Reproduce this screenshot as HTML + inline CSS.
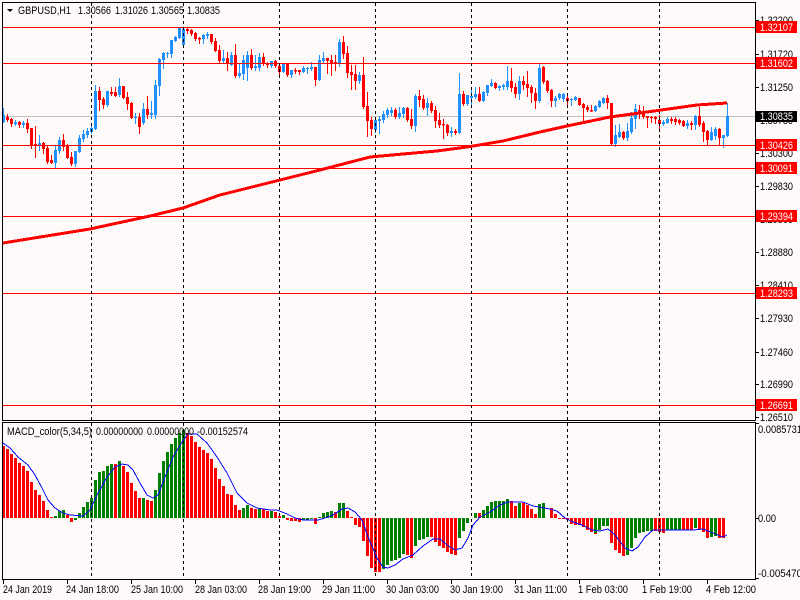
<!DOCTYPE html>
<html><head><meta charset="utf-8"><style>
html,body{margin:0;padding:0;background:#fffafa;width:800px;height:600px;overflow:hidden}
svg{display:block;position:absolute;left:0;top:0}
text{font-family:"Liberation Sans",sans-serif;font-size:11px;fill:#000}
text.w{fill:#fff}
</style></head><body>
<svg width="800" height="600" viewBox="0 0 800 600">
<rect width="800" height="600" fill="#fffafa"/>
<g shape-rendering="crispEdges" fill="none">
<!-- gray bid line -->
<path d="M3 116.5H755" stroke="#c0c0c0"/>
<!-- candle wicks red -->
<path stroke="#f00" d="M7.5 114V122M11.5 118V127M19.5 121V128M27.5 119V133M31.5 128V149M35.5 126V158M43.5 142V154M47.5 146V164M51.5 155V164M63.5 134V151M67.5 144V159M71.5 152V166M99.5 87V111M103.5 97V109M111.5 87V96M115.5 87V97M123.5 86V99M127.5 92V110M131.5 102V119M139.5 113V134M147.5 96V119M187.5 28V34M191.5 29V36M195.5 32V41M199.5 37V44M211.5 34V44M215.5 38V52M219.5 45V64M227.5 52V71M235.5 44V78M251.5 49V70M263.5 53V66M267.5 62V68M275.5 60V68M279.5 63V77M287.5 63V77M295.5 68V74M299.5 70V75M315.5 67V86M327.5 58V74M331.5 55V76M335.5 55V71M343.5 36V59M347.5 46V78M351.5 65V90M355.5 65V90M363.5 57V109M367.5 92V137M371.5 117V136M395.5 108V119M407.5 107V122M411.5 109V129M419.5 90V107M423.5 95V110M431.5 101V113M435.5 106V128M439.5 113V128M443.5 119V139M447.5 124V136M455.5 129V135M463.5 91V106M479.5 87V102M495.5 82V89M511.5 68V92M515.5 83V98M523.5 76V90M527.5 71V97M531.5 85V103M535.5 88V109M543.5 66V84M547.5 80V93M551.5 89V107M567.5 93V107M579.5 98V106M583.5 103V124M587.5 105V112M591.5 105V112M607.5 95V109M611.5 103V145M623.5 131V140M639.5 105V119M643.5 106V119M647.5 116V128M651.5 116V123M655.5 116V124M659.5 115V132M671.5 117V124M675.5 117V125M679.5 119V125M683.5 120V127M691.5 121V130M699.5 107V127M703.5 121V142M707.5 130V146M719.5 128V145"/>
<!-- candle wicks blue -->
<path stroke="#1e90ff" d="M3.5 108V123M15.5 120V126M23.5 121V128M39.5 135V151M55.5 145V168M59.5 137V154M75.5 151V167M79.5 135V153M83.5 130V142M87.5 128V138M91.5 123V134M95.5 85V130M107.5 91V107M119.5 78V97M135.5 113V124M143.5 103V125M151.5 101V119M155.5 80V119M159.5 58V96M163.5 52V69M167.5 52V58M171.5 40V58M175.5 36V42M179.5 28V39M183.5 28V46M203.5 34V44M207.5 32V39M223.5 50V64M231.5 52V66M239.5 63V78M243.5 55V80M247.5 51V81M255.5 55V71M259.5 53V71M271.5 61V68M283.5 63V73M291.5 70V78M303.5 66V73M307.5 67V74M311.5 62V71M319.5 55V81M323.5 52V64M339.5 39V67M359.5 72V84M375.5 117V133M379.5 116V134M383.5 111V123M387.5 108V118M391.5 107V116M399.5 107V119M403.5 107V118M415.5 94V132M427.5 98V116M451.5 127V137M459.5 73V134M467.5 95V106M471.5 89V106M475.5 87V99M483.5 91V102M487.5 85V96M491.5 79V87M499.5 85V91M503.5 84V90M507.5 66V90M519.5 76V100M539.5 63V103M555.5 96V107M559.5 93V100M563.5 93V102M571.5 98V106M575.5 96V101M595.5 105V112M599.5 100V108M603.5 97V104M615.5 125V147M619.5 124V138M627.5 123V141M631.5 112V134M635.5 104V129M663.5 120V126M667.5 117V124M687.5 120V129M695.5 115V130M711.5 127V141M715.5 127V140M723.5 135V148M727.5 103V137"/>
<!-- candle bodies red -->
<path stroke="#f00" stroke-width="3" d="M7.5 117V120M11.5 119V124M19.5 122V125M27.5 123V129M31.5 128V145M35.5 144V146M43.5 143V149M47.5 148V162M51.5 160V163M63.5 140V147M67.5 145V158M71.5 157V164M99.5 91V100M103.5 99V105M111.5 92V94M115.5 92V96M123.5 86V98M127.5 97V104M131.5 103V118M139.5 117V127M147.5 109V115M187.5 29V31M191.5 30V34M195.5 33V39M199.5 38V39.500M211.5 34V42M215.5 41V51M219.5 50V61M227.5 58V64M235.5 55V76M251.5 55V68M263.5 57V64M267.5 63V65M275.5 61V66M279.5 66V72M287.5 63V75M295.5 70V71.500M299.5 70V72M315.5 67V80M327.5 58V61M331.5 60V63M335.5 62V64M343.5 42V54M347.5 53V73M351.5 72V75M355.5 74V81M363.5 75V107M367.5 106V121M371.5 120V129M395.5 110V117M407.5 108V120M411.5 119V126M419.5 96V100M423.5 99V108M431.5 103V111M435.5 110V121M439.5 120V125M443.5 124V125.500M447.5 125V133M455.5 131V133M463.5 94V104M479.5 94V101M495.5 83V88M511.5 81V88M515.5 87V94M523.5 81V85M527.5 84V88M531.5 87V93M535.5 93V101M543.5 67V82M547.5 81V91M551.5 90V101M567.5 98V101M579.5 98V105M583.5 104V108M587.5 107V110M591.5 110V111.500M607.5 98V103M611.5 103V144M623.5 132V138M639.5 110V111.500M643.5 111V117M647.5 116V118M651.5 117V118M655.5 117V119M659.5 120V124M671.5 119V121M675.5 119V122M679.5 120V123M683.5 121V126M691.5 123V125M699.5 116V125M703.5 123V132M707.5 131V140M719.5 129V138"/>
<!-- candle bodies blue -->
<path stroke="#1e90ff" stroke-width="3" d="M3.500 115V122M15.500 122V124M23.500 123V125M39.500 143V145M55.500 150V163M59.500 140V151M75.500 151V164M79.500 138V152M83.500 134V139M87.500 131V135M91.500 128V132M95.500 91V129M107.500 91V105M119.500 86V95M135.500 117V118M143.500 109V123M151.500 113V115M155.500 85V115M159.500 59V86M163.500 53V60M167.500 53V54M171.500 40V54M175.500 37V41M179.500 28V38M183.500 29V45M203.500 35V39M207.500 34V36M223.500 58V61M231.500 55V65M239.500 73V76M243.500 60V74M247.500 55V68M255.500 66V68M259.500 57V68M271.500 61V66M283.500 63V72M291.500 70V75M303.500 68V72M307.500 68V69M311.500 67V69M319.500 60V80M323.500 58V61M339.500 42V63M359.500 75V81M375.500 120V130M379.500 119V121M383.500 114V120M387.500 110V115M391.500 110V113M399.500 113V117M403.500 108V114M415.500 96V126M427.500 103V108M451.500 131V133M459.500 94V133M467.500 95V104M471.500 96V98M475.500 94V97M483.500 92V101M487.500 85V93M491.500 83V86M499.500 86V88M503.500 85V87M507.500 81V87M519.500 81V94M539.500 68V101M555.500 98V101M559.500 94V98M563.500 94V99M571.500 99V100M575.500 97V100M595.500 106V111M599.500 101V107M603.500 98V103M615.500 135V144M619.500 132V137M627.500 131V138M631.500 118V132M635.500 109V119M663.500 122V124M667.500 119V123M687.500 123V126M695.500 116V125M711.500 132V140M715.500 129V136M723.500 135V138M727.500 116V136"/>
<!-- MACD histogram red -->
<path stroke="#f00" stroke-width="3" d="M3.500 446V518M7.500 449V518M11.500 454V518M15.500 458V518M19.500 463V518M23.500 466V518M27.500 471V518M31.500 482V518M35.500 490V518M39.500 495V518M43.500 501V518M47.500 510V518M51.500 517V518M67.500 515V518M71.500 518V522M115.500 464V518M123.500 466V518M127.500 472V518M131.500 483V518M135.500 491V518M139.500 498V518M147.500 500V518M151.500 501V518M187.500 433V518M191.500 436V518M195.500 442V518M199.500 447V518M203.500 450V518M207.500 453V518M211.500 459V518M215.500 468V518M219.500 479V518M223.500 486V518M227.500 494V518M231.500 495V518M235.500 505V518M239.500 510V518M251.500 508V518M255.500 509V518M263.500 509V518M267.500 511V518M275.500 512V518M279.500 516V518M287.500 518V520M291.500 518V521M295.500 518V521M299.500 518V522M315.500 518V524M335.500 512V518M347.500 511V518M351.500 517V518M355.500 518V525M359.500 518V527M363.500 518V541M367.500 518V556M371.500 518V568M375.500 518V572M379.500 518V572M407.500 518V555M411.500 518V558M431.500 518V537M435.500 518V542M439.500 518V546M443.500 518V548M447.500 518V552M451.500 518V554M455.500 518V555M479.500 513V518M511.500 501V518M515.500 506V518M523.500 503V518M527.500 505V518M531.500 509V518M535.500 514V518M551.500 508V518M555.500 514V518M559.500 518V519M563.500 518V519M567.500 518V520M571.500 518V524M575.500 518V525M579.500 518V525M583.500 518V527M587.500 518V530M591.500 518V532M595.500 518V534M611.500 518V543M615.500 518V550M619.500 518V553M623.500 518V556M655.500 518V531M659.500 518V532M663.500 518V533M683.500 518V530M687.500 518V530M691.500 518V530M699.500 518V529M703.500 518V532M707.500 518V538M719.500 518V538M723.500 518V538"/>
<!-- MACD histogram green -->
<path stroke="#008000" stroke-width="3" d="M55.500 516V518M59.500 511V518M63.500 510V518M75.500 518V520M79.500 513V518M83.500 507V518M87.500 502V518M91.500 498V518M95.500 480V518M99.500 472V518M103.500 471V518M107.500 466V518M111.500 464V518M119.500 461V518M143.500 498V518M155.500 490V518M159.500 473V518M163.500 461V518M167.500 452V518M171.500 444V518M175.500 438V518M179.500 433V518M183.500 430V518M243.500 508V518M247.500 505V518M259.500 508V518M271.500 511V518M283.500 515V518M303.500 518V520M307.500 518V520M311.500 518V519M319.500 517V518M323.500 513V518M327.500 512V518M331.500 511V518M339.500 503V518M343.500 503V518M383.500 518V569M387.500 518V565M391.500 518V561M395.500 518V560M399.500 518V558M403.500 518V554M415.500 518V546M419.500 518V540M423.500 518V539M427.500 518V537M459.500 518V538M463.500 518V531M467.500 518V523M475.500 513V518M483.500 510V518M487.500 506V518M491.500 502V518M495.500 501V518M499.500 501V518M503.500 501V518M507.500 499V518M519.500 503V518M539.500 504V518M543.500 503V518M595.500 518V533M599.500 518V530M603.500 518V526M607.500 518V526M627.500 518V555M631.500 518V548M635.500 518V538M639.500 518V533M643.500 518V532M647.500 518V531M651.500 518V531M667.500 518V530M671.500 518V530M675.500 518V530M679.500 518V530M695.500 518V528M711.500 518V537M715.500 518V536"/>
<!-- horizontal red lines -->
<path stroke="#f00" d="M3 27.500H756M3 63.500H756M3 145.500H756M3 168.500H756M3 216.500H756M3 293.500H756M3 405.500H756"/>
<!-- vertical dashed grid -->
<path stroke="#000" stroke-dasharray="3 3" d="M91.500 3V420M183.500 3V420M279.500 3V420M375.500 3V420M471.500 3V420M567.500 3V420M659.500 3V420M91.500 423V579M183.500 423V579M279.500 423V579M375.500 423V579M471.500 423V579M567.500 423V579M659.500 423V579"/>
</g>
<!-- moving average -->
<polyline fill="none" stroke="#f00" stroke-width="3" shape-rendering="crispEdges" points="3,243 90,229 150,216 183,208 220,195 270,182.500 320,170 370,157 403,154 437,151 467,147 503,141 540,132 567,126 610,117 647,112 697,105 727,103"/>
<!-- MACD signal -->
<polyline fill="none" stroke="#00f" stroke-width="1" shape-rendering="crispEdges" points="3,443 10,448 18,457 28,465 35,475 42,488 48,500 55,508 63,513 70,515 83,516 90,510 97,495 107,477 115,467 122,464 128,465 133,470 140,483 147,495 153,498 158,495 165,477 173,457 182,442 188,434 197,434 207,443 217,457 227,473 237,493 247,503 257,508 270,510 277,510 287,514 295,518 303,520 318,520 325,518 333,515 342,509 348,508 355,512 362,520 368,537 377,558 383,567 388,568 395,565 403,559 413,555 423,546 433,539 440,539 447,545 455,550 462,548 468,538 473,525 480,517 490,512 500,505 508,502 523,502 533,506 539,507 550,509 557,511 565,518 573,522 582,525 592,530 600,531 608,529 615,535 625,548 632,551 638,547 645,537 653,530 693,530 703,529 713,533 723,537 727,535"/>
<g shape-rendering="crispEdges" fill="none" stroke="#000">
<!-- frame -->
<path d="M2.500 2.500H755.500V420.500H2.500ZM2.500 422.500H755.500V579.500H2.500Z"/>
<!-- y ticks -->
<path d="M756 20.500H759M756 54.500H759M756 87.500H759M756 120.500H759M756 153.500H759M756 186.500H759M756 219.500H759M756 252.500H759M756 285.500H759M756 318.500H759M756 352.500H759M756 384.500H759M756 417.500H759M756 423.500H759M756 518.500H759M756 578.500H759"/>
<!-- x ticks -->
<path d="M3.500 580V584M67.500 580V584M131.500 580V584M195.500 580V584M259.500 580V584M323.500 580V584M387.500 580V584M451.500 580V584M515.500 580V584M579.500 580V584M643.500 580V584M707.500 580V584"/>
</g>
<!-- header -->
<polygon points="7,9 13,9 10,12" fill="#000"/>
<text x="18" y="14" textLength="53" lengthAdjust="spacingAndGlyphs">GBPUSD,H1</text>
<text x="78" y="14" textLength="33" lengthAdjust="spacingAndGlyphs">1.30566</text>
<text x="115" y="14" textLength="33" lengthAdjust="spacingAndGlyphs">1.31026</text>
<text x="151" y="14" textLength="33" lengthAdjust="spacingAndGlyphs">1.30565</text>
<text x="187" y="14" textLength="33" lengthAdjust="spacingAndGlyphs">1.30835</text>
<text x="7" y="435" textLength="85" lengthAdjust="spacingAndGlyphs">MACD_color(5,34,5)</text>
<text x="96" y="435" textLength="47" lengthAdjust="spacingAndGlyphs">0.00000000</text>
<text x="147" y="435" textLength="47" lengthAdjust="spacingAndGlyphs">0.00000000</text>
<text x="197" y="435" textLength="51" lengthAdjust="spacingAndGlyphs">-0.00152574</text>
<!-- y axis labels -->
<text x="760" y="24" textLength="33" lengthAdjust="spacingAndGlyphs">1.32200</text>
<text x="760" y="58" textLength="33" lengthAdjust="spacingAndGlyphs">1.31720</text>
<text x="760" y="91" textLength="33" lengthAdjust="spacingAndGlyphs">1.31250</text>
<text x="760" y="124" textLength="33" lengthAdjust="spacingAndGlyphs">1.30780</text>
<text x="760" y="157" textLength="33" lengthAdjust="spacingAndGlyphs">1.30300</text>
<text x="760" y="190" textLength="33" lengthAdjust="spacingAndGlyphs">1.29830</text>
<text x="760" y="223" textLength="33" lengthAdjust="spacingAndGlyphs">1.29360</text>
<text x="760" y="256" textLength="33" lengthAdjust="spacingAndGlyphs">1.28880</text>
<text x="760" y="289" textLength="33" lengthAdjust="spacingAndGlyphs">1.28410</text>
<text x="760" y="322" textLength="33" lengthAdjust="spacingAndGlyphs">1.27930</text>
<text x="760" y="356" textLength="33" lengthAdjust="spacingAndGlyphs">1.27460</text>
<text x="760" y="388" textLength="33" lengthAdjust="spacingAndGlyphs">1.26990</text>
<text x="760" y="421" textLength="33" lengthAdjust="spacingAndGlyphs">1.26510</text>
<text x="758" y="433" textLength="44" lengthAdjust="spacingAndGlyphs">0.0085731</text>
<text x="758" y="522" textLength="18" lengthAdjust="spacingAndGlyphs">0.00</text>
<text x="758" y="577" textLength="44" lengthAdjust="spacingAndGlyphs">-0.005470</text>
<!-- price tags -->
<g shape-rendering="crispEdges">
<rect x="756" y="21" width="41" height="12" fill="#f00"/>
<rect x="756" y="57" width="41" height="12" fill="#f00"/>
<rect x="756" y="111" width="41" height="11" fill="#000"/>
<rect x="756" y="139" width="41" height="12" fill="#f00"/>
<rect x="756" y="162" width="41" height="12" fill="#f00"/>
<rect x="756" y="210" width="41" height="12" fill="#f00"/>
<rect x="756" y="287" width="41" height="12" fill="#f00"/>
<rect x="756" y="399" width="41" height="12" fill="#f00"/>
</g>
<text class="w" x="760" y="31" textLength="33" lengthAdjust="spacingAndGlyphs">1.32107</text>
<text class="w" x="760" y="67" textLength="33" lengthAdjust="spacingAndGlyphs">1.31602</text>
<text class="w" x="760" y="120" textLength="33" lengthAdjust="spacingAndGlyphs">1.30835</text>
<text class="w" x="760" y="149" textLength="33" lengthAdjust="spacingAndGlyphs">1.30426</text>
<text class="w" x="760" y="172" textLength="33" lengthAdjust="spacingAndGlyphs">1.30091</text>
<text class="w" x="760" y="220" textLength="33" lengthAdjust="spacingAndGlyphs">1.29394</text>
<text class="w" x="760" y="297" textLength="33" lengthAdjust="spacingAndGlyphs">1.28293</text>
<text class="w" x="760" y="409" textLength="33" lengthAdjust="spacingAndGlyphs">1.26691</text>
<!-- time axis -->
<text x="3" y="593" textLength="49" lengthAdjust="spacingAndGlyphs">24 Jan 2019</text>
<text x="66" y="593" textLength="53" lengthAdjust="spacingAndGlyphs">24 Jan 18:00</text>
<text x="131" y="593" textLength="52" lengthAdjust="spacingAndGlyphs">25 Jan 10:00</text>
<text x="195" y="593" textLength="52" lengthAdjust="spacingAndGlyphs">28 Jan 03:00</text>
<text x="258" y="593" textLength="53" lengthAdjust="spacingAndGlyphs">28 Jan 19:00</text>
<text x="322" y="593" textLength="53" lengthAdjust="spacingAndGlyphs">29 Jan 11:00</text>
<text x="386" y="593" textLength="53" lengthAdjust="spacingAndGlyphs">30 Jan 03:00</text>
<text x="450" y="593" textLength="53" lengthAdjust="spacingAndGlyphs">30 Jan 19:00</text>
<text x="514" y="593" textLength="53" lengthAdjust="spacingAndGlyphs">31 Jan 11:00</text>
<text x="578" y="593" textLength="50" lengthAdjust="spacingAndGlyphs">1 Feb 03:00</text>
<text x="642" y="593" textLength="50" lengthAdjust="spacingAndGlyphs">1 Feb 19:00</text>
<text x="706" y="593" textLength="50" lengthAdjust="spacingAndGlyphs">4 Feb 12:00</text>
</svg>
</body></html>
